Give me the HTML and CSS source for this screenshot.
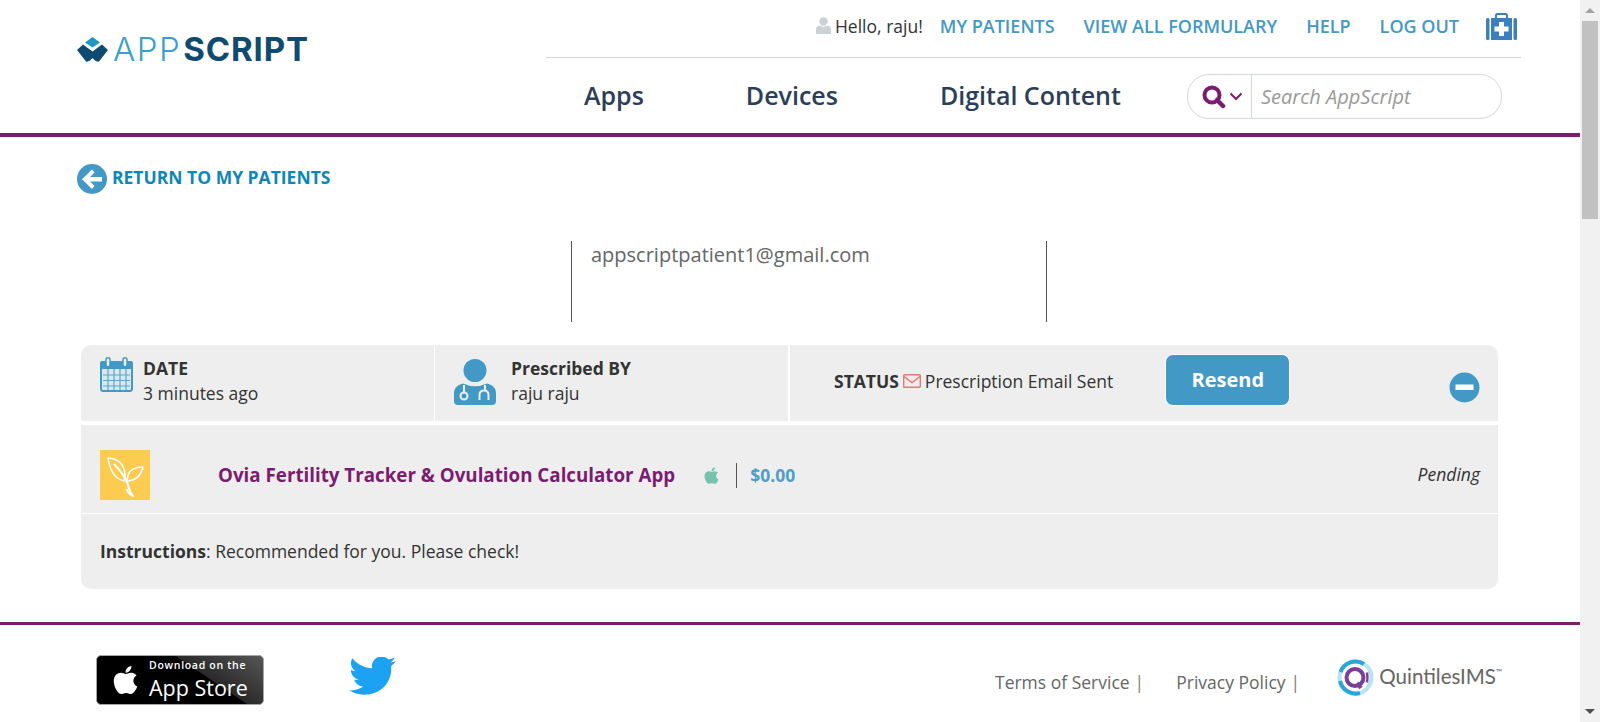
FILE: index.html
```html
<!DOCTYPE html>
<html lang="en">
<head>
    <meta charset="UTF-8">
    <meta name="viewport" content="width=device-width, initial-scale=1.0">
    <title>AppScript - Patient Prescriptions</title>
    <link rel="stylesheet" href="styles.css">
</head>
<body>
<div class="page">
    <div class="main">

        <!-- Header -->
        <header class="site-header">
            <a class="logo" href="#">
                <svg class="logo-mark" width="31" height="25" viewBox="0 0 31 25">
                    <path d="M15.500 0L23 5.500L15.500 10.500L8 5.500Z" fill="#1f97c4"/>
                    <path d="M6 7.500L15.500 14.500L25 7.500L31 13L22 24.500Q20 25 18 23.500L15.500 21L13 23.500Q11 25 9 24.500L0 13Z" fill="#0f4a70"/>
                </svg>
                <span class="logo-app">APP</span><span class="logo-script">SCRIPT</span>
            </a>
            <div class="header-right">
                <div class="top-links">
                    <svg class="user-icon" width="15" height="17" viewBox="0 0 15 17">
                        <circle cx="7.500" cy="4.500" r="4.200" fill="#ccd1d3"/>
                        <path d="M0 17V12.500Q0 9 3.500 8.500L7.500 10L11.500 8.500Q15 9 15 12.500V17Z" fill="#ccd1d3"/>
                    </svg>
                    <span class="hello">Hello, raju!</span>
                    <a href="#" class="top-link">MY PATIENTS</a>
                    <a href="#" class="top-link">VIEW ALL FORMULARY</a>
                    <a href="#" class="top-link">HELP</a>
                    <a href="#" class="top-link last">LOG OUT</a>
                    <svg class="bag-icon" width="31" height="27" viewBox="0 0 31 27">
                        <path d="M10 5V2.500Q10 1 11.500 1H19.500Q21 1 21 2.500V5" fill="none" stroke="#3b7fbc" stroke-width="2"/>
                        <rect x="0" y="5" width="3.500" height="22" rx="1.500" fill="#3b7fbc"/>
                        <rect x="27.500" y="5" width="3.500" height="22" rx="1.500" fill="#3b7fbc"/>
                        <rect x="5" y="5" width="21" height="22" fill="#3b7fbc"/>
                        <path d="M13 9H18V13.500H22.500V18.500H18V23H13V18.500H8.500V13.500H13Z" fill="#fff"/>
                    </svg>
                </div>
                <div class="nav-row">
                    <nav class="main-nav">
                        <a href="#">Apps</a>
                        <a href="#">Devices</a>
                        <a href="#">Digital Content</a>
                    </nav>
                    <div class="search-box">
                        <div class="search-type">
                            <svg width="24" height="24" viewBox="0 0 24 24">
                                <circle cx="10" cy="10" r="7.500" fill="none" stroke="#7a1c70" stroke-width="4"/>
                                <path d="M15 15L21 21" stroke="#7a1c70" stroke-width="4.500" stroke-linecap="round"/>
                            </svg>
                            <svg width="14" height="9" viewBox="0 0 14 9">
                                <path d="M1.500 1.500L7 7L12.500 1.500" fill="none" stroke="#7a1c70" stroke-width="2"/>
                            </svg>
                        </div>
                        <span class="search-placeholder">Search AppScript</span>
                    </div>
                </div>
            </div>
        </header>

        <div class="content">
            <a href="#" class="back-link">
                <svg width="30" height="30" viewBox="0 0 30 30">
                    <circle cx="15" cy="15" r="15" fill="#4299c6"/>
                    <path d="M15 5.500L17.500 8.500L13 13H25V17.500H13L17.500 22L15 25L5 15.200Z" fill="#fff"/>
                </svg>
                <span>RETURN TO MY PATIENTS</span>
            </a>

            <div class="patient-row">
                <div class="patient-email">appscriptpatient1@gmail.com</div>
            </div>

            <!-- Prescription panel -->
            <section class="panel">
                <div class="panel-head">
                    <div class="cell cell-date">
                        <svg class="calendar-icon" width="33" height="35" viewBox="0 0 33 35">
                            <rect x="1" y="5" width="31" height="29" rx="2.500" fill="#dbe7ee" stroke="#4299c6" stroke-width="2"/>
                            <rect x="0" y="4" width="33" height="8" rx="2" fill="#4299c6"/>
                            <rect x="6" y="0.800" width="4" height="9" rx="2" fill="#eee" stroke="#4299c6" stroke-width="1.500"/>
                            <rect x="23" y="0.800" width="4" height="9" rx="2" fill="#eee" stroke="#4299c6" stroke-width="1.500"/>
                            <path d="M3 18H30M3 23.500H30M3 29H30M8 12V33M14 12V33M20 12V33M26 12V33" stroke="#5ba6cf" stroke-width="1.200" fill="none"/>
                        </svg>
                        <div class="cell-text">
                            <strong>DATE</strong>
                            <span>3 minutes ago</span>
                        </div>
                    </div>
                    <div class="cell cell-doctor">
                        <svg class="doctor-icon" width="42" height="46" viewBox="0 0 42 46">
                            <circle cx="21" cy="11.500" r="11.500" fill="#4299c6"/>
                            <path d="M9 24.500Q21 30 33 24.500L36 25.500Q42 28 42 34V42Q42 46 38 46H4Q0 46 0 42V34Q0 28 6 25.500Z" fill="#4299c6"/>
                            <path d="M10 26V33" fill="none" stroke="#eee" stroke-width="2"/>
                            <circle cx="10" cy="37" r="3.500" fill="none" stroke="#eee" stroke-width="2"/>
                            <path d="M25.500 41V36Q25.500 31.500 30 31.500Q34.500 31.500 34.500 36V41M31 26V31" fill="none" stroke="#eee" stroke-width="2"/>
                        </svg>
                        <div class="cell-text">
                            <strong>Prescribed BY</strong>
                            <span>raju raju</span>
                        </div>
                    </div>
                    <div class="cell cell-status">
                        <strong>STATUS</strong>
                        <svg class="mail-icon" width="18" height="14" viewBox="0 0 18 14">
                            <rect x="0.700" y="0.700" width="16.600" height="12.600" rx="1" fill="none" stroke="#e5786d" stroke-width="1.400"/>
                            <path d="M1 2.500L9 8.500L17 2.500" fill="none" stroke="#e5786d" stroke-width="1.400"/>
                        </svg>
                        <span class="status-text">Prescription Email Sent</span>
                        <button class="btn-resend">Resend</button>
                        <svg class="collapse-icon" width="31" height="31" viewBox="0 0 31 31">
                            <circle cx="15.500" cy="15.500" r="15" fill="#4299c6"/>
                            <rect x="6.500" y="12.500" width="18" height="5.500" fill="#fff"/>
                        </svg>
                    </div>
                </div>

                <div class="app-row">
                    <div class="app-tile">
                        <svg width="50" height="50" viewBox="0 0 50 50">
                            <g fill="none" stroke="#fff" stroke-width="1.600" stroke-linejoin="round">
                                <path d="M8 8Q21 9 24 19Q26 26 24 31Q11 28 8 8Z"/>
                                <path d="M43 17Q31 17 28 25Q27 29 27.500 31Q40 30 43 17Z"/>
                                <path d="M14 14Q26 26 29 38Q30 43 33 46Q28 44 26.500 39" stroke-width="2"/>
                            </g>
                        </svg>
                    </div>
                    <a href="#" class="app-name">Ovia Fertility Tracker &amp; Ovulation Calculator App</a>
                    <svg class="apple-icon" width="17" height="19" viewBox="0 0 384 512">
                        <path fill="#76c2ad" d="M318.700 268.700c-.2-36.700 16.400-64.400 50-84.800-18.800-26.900-47.200-41.700-84.700-44.600-35.500-2.800-74.300 20.700-88.500 20.700-15 0-49.400-19.700-76.400-19.700C63.300 141.200 4 184.800 4 273.500q0 39.300 14.400 81.200c12.800 36.700 59 126.700 107.200 125.200 25.200-.6 43-17.900 75.800-17.900 31.800 0 48.300 17.900 76.400 17.900 48.600-.7 90.400-82.500 102.600-119.300-65.200-30.700-61.700-90-61.700-91.900zm-56.600-164.200c27.300-32.400 24.800-61.900 24-72.500-24.100 1.400-52 16.400-67.900 34.900-17.500 19.800-27.800 44.300-25.600 71.900 26.100 2 49.900-11.400 69.500-34.300z"/>
                    </svg>
                    <span class="app-price">$0.00</span>
                    <em class="app-state">Pending</em>
                </div>

                <div class="instructions"><strong>Instructions</strong>: Recommended for you. Please check!</div>
            </section>
        </div>

        <!-- Footer -->
        <footer class="site-footer">
            <a href="#" class="store-badge">
                <svg width="27" height="32" viewBox="0 0 384 512">
                    <path fill="#fff" d="M318.700 268.700c-.2-36.700 16.400-64.400 50-84.800-18.800-26.900-47.200-41.700-84.700-44.600-35.500-2.800-74.300 20.700-88.500 20.700-15 0-49.400-19.700-76.400-19.700C63.300 141.200 4 184.800 4 273.500q0 39.300 14.400 81.200c12.800 36.700 59 126.700 107.200 125.200 25.200-.6 43-17.900 75.800-17.900 31.800 0 48.300 17.900 76.400 17.900 48.600-.7 90.400-82.500 102.600-119.300-65.200-30.700-61.700-90-61.700-91.900zm-56.600-164.200c27.300-32.400 24.800-61.900 24-72.500-24.100 1.400-52 16.400-67.900 34.900-17.500 19.800-27.800 44.300-25.600 71.900 26.100 2 49.900-11.400 69.500-34.300z"/>
                </svg>
                <span class="badge-text">
                    <small>Download on the</small>
                    <b>App Store</b>
                </span>
            </a>
            <a href="#" class="twitter">
                <svg width="47" height="40" viewBox="0 0 512 420">
                    <path fill="#1da1f2" d="M459.370 110.700c.325 4.548.325 9.097.325 13.645 0 138.720-105.583 278-298.558 278-59.452 0-114.680-17.219-161.137-47.106 8.447.974 16.568 1.299 25.340 1.299 49.055 0 94.213-16.568 130.274-44.832-46.132-.975-84.792-31.188-98.112-72.772 6.498.974 12.995 1.624 19.818 1.624 9.421 0 18.843-1.300 27.614-3.573-48.081-9.747-84.143-51.980-84.143-102.985v-1.299c13.969 7.797 30.214 12.670 47.431 13.319-28.264-18.843-46.781-51.005-46.781-87.391 0-19.492 5.197-37.360 14.294-52.954 51.655 63.675 129.300 105.258 216.365 109.807-1.624-7.797-2.599-15.918-2.599-24.040 0-57.828 46.782-104.934 104.934-104.934 30.213 0 57.502 12.670 76.670 33.137 23.715-4.548 46.456-13.320 66.599-25.340-7.798 24.366-24.366 44.833-46.132 57.827 21.117-2.273 41.584-8.122 60.426-16.243-14.292 20.791-32.161 39.308-52.628 54.253z"/>
                </svg>
            </a>
            <div class="footer-links">
                <a href="#">Terms of Service</a><span class="pipe">|</span>
                <a href="#" class="second">Privacy Policy</a><span class="pipe">|</span>
            </div>
            <div class="quintiles">
                <svg width="37" height="37" viewBox="0 0 37 37">
                    <g fill="none" stroke-width="4">
                        <circle cx="18.500" cy="18.500" r="16" stroke="#b7e3f3"/>
                        <path d="M27 5A16 16 0 0 0 3.500 13M3 22A16 16 0 0 0 23 34" stroke="#2aa7d9"/>
                        <circle cx="18" cy="18.500" r="8.500" stroke="#7c3f98"/>
                        <path d="M20 24L24 29" stroke="#7c3f98"/>
                        <path d="M30 13.500Q31 18.500 30 23.500" stroke="#7c3f98" stroke-width="2.500"/>
                    </g>
                </svg>
                <span class="quintiles-name">QuintilesIMS<sup>™</sup></span>
            </div>
        </footer>
    </div>

    <!-- Browser scrollbar as it appears in the page -->
    <div class="scrollbar">
        <div class="scroll-arrow"><div class="arrow-up"></div></div>
        <div class="scroll-thumb"></div>
        <div class="scroll-track"></div>
        <div class="scroll-arrow"><div class="arrow-down"></div></div>
    </div>
</div>
</body>
</html>
```

FILE: styles.css
```css
* {
    box-sizing: border-box;
}

html, body {
    margin: 0;
    padding: 0;
    height: 722px;
    overflow: hidden;
    background-color: #fff;
}

body {
    font-family: "Open Sans", Arial, sans-serif;
    color: #333;
}

a {
    text-decoration: none;
}

svg {
    display: block;
    flex: none;
}

.page {
    display: flex;
    height: 722px;
}

.main {
    width: 1580px;
    flex: none;
}

/* Header */
.site-header {
    display: flex;
    height: 137px;
    border-bottom: 4px solid #7a1c70;
}

.logo {
    display: flex;
    align-items: center;
    height: 26px;
    margin: 36px 0 0 77px;
    white-space: nowrap;
}

.logo-mark {
    margin-right: 5px;
}

.logo-app,
.logo-script {
    font-family: Inter, "Liberation Sans", sans-serif;
    font-size: 33px;
    line-height: 26px;
}

.logo-app {
    font-weight: 300;
    color: #3a9fca;
    letter-spacing: 1.5px;
}

.logo-script {
    font-weight: 700;
    color: #0f4a70;
    letter-spacing: 0.9px;
    margin-left: 2px;
}

.header-right {
    width: 975px;
    margin: 0 59px 0 auto;
}

.top-links {
    display: flex;
    align-items: center;
    justify-content: flex-end;
    height: 58px;
    padding: 0 4px 6px 0;
    border-bottom: 1px solid #d3d6d8;
}

.user-icon {
    margin-right: 4px;
}

.hello {
    font-size: 17.500px;
    color: #333;
    margin-right: 17px;
}

.top-link {
    font-size: 18px;
    font-weight: 600;
    color: #4299c6;
    margin-right: 29px;
}

.top-link.last {
    margin-right: 27px;
}

.bag-icon {
    margin-top: 2px;
}

.nav-row {
    display: flex;
    align-items: center;
    height: 74px;
    padding: 0 19px 0 38px;
    justify-content: space-between;
}

.main-nav {
    display: flex;
    gap: 102px;
}

.main-nav a {
    font-size: 25px;
    font-weight: 600;
    color: #2b3e5a;
}

.search-box {
    display: flex;
    align-items: center;
    width: 315px;
    height: 45px;
    margin-top: 3px;
    border: 1px solid #d3d8da;
    border-radius: 22px;
    background-color: #fff;
}

.search-type {
    display: flex;
    align-items: center;
    gap: 3px;
    width: 64px;
    height: 100%;
    padding-left: 14px;
    border-right: 1px solid #d3d8da;
}

.search-placeholder {
    margin-left: 9px;
    font-size: 20px;
    font-style: italic;
    color: #999;
}

/* Content */
.content {
    padding: 27px 82px 0 81px;
}

.back-link {
    display: flex;
    align-items: center;
    margin-left: -4px;
    height: 30px;
    gap: 5px;
    font-size: 17.500px;
    font-weight: 700;
    color: #0f86b8;
}

.back-link span {
    margin-top: -5px;
}

.patient-row {
    height: 81px;
    margin: 47px 451px 0 490px;
    padding: 0 19px;
    border-left: 1px solid #555;
    border-right: 1px solid #555;
}

.patient-email {
    font-size: 20px;
    line-height: 28px;
    color: #666;
}

.panel {
    margin-top: 23px;
}

.panel-head {
    display: flex;
    height: 76px;
    margin-bottom: 4px;
    border-radius: 10px 10px 0 0;
    background-color: #eee;
}

.cell {
    display: flex;
    align-items: flex-start;
    height: 100%;
}

.cell-text {
    display: flex;
    flex-direction: column;
    margin-top: 1px;
    font-size: 17.500px;
    line-height: 25px;
}

.cell-text strong {
    font-weight: 700;
}

.cell-date {
    width: 354px;
    padding: 10px 0 0 19px;
    gap: 10px;
    border-right: 1px solid #fff;
}

.calendar-icon {
    margin-top: 2px;
}

.cell-doctor {
    width: 355px;
    padding: 10px 0 0 19px;
    gap: 15px;
    border-right: 2px solid #fff;
}

.doctor-icon {
    margin-top: 4px;
}

.cell-status {
    flex: 1;
    align-items: center;
    padding: 0 18px 4px 44px;
    font-size: 17.500px;
}

.mail-icon {
    margin: 0 4px;
}

.btn-resend {
    width: 125px;
    height: 52px;
    margin: -2px 0 0 52px;
    border: 1px solid #fff;
    border-radius: 8px;
    background-color: #4299c6;
    color: #fff;
    font-family: inherit;
    font-size: 20px;
    font-weight: 700;
    padding: 0 0 2px;
}

.collapse-icon {
    margin: 12px 0 0 auto;
}

.app-row {
    display: flex;
    align-items: center;
    height: 89px;
    padding: 12px 18px 0 19px;
    border-bottom: 1px solid #fff;
    background-color: #eee;
}

.app-tile {
    width: 50px;
    height: 50px;
    background-color: #fdcb50;
}

.app-name {
    margin: -2px 0 0 68px;
    font-size: 18.750px;
    font-weight: 700;
    color: #7a1c70;
}

.apple-icon {
    margin-left: 28px;
}

.app-price {
    margin-left: 16px;
    padding-left: 13px;
    border-left: 1px solid #555;
    font-size: 17.500px;
    font-weight: 700;
    line-height: 25px;
    color: #4f9ec9;
}

.app-state {
    margin: -2px 0 0 auto;
    font-size: 17.500px;
    color: #333;
}

.instructions {
    height: 75px;
    padding: 0 19px;
    font-size: 17.500px;
    line-height: 74px;
    border-radius: 0 0 10px 10px;
    background-color: #eee;
}

.instructions strong {
    font-weight: 700;
}

/* Footer */
.site-footer {
    display: flex;
    height: 100px;
    margin-top: 33px;
    border-top: 3px solid #7a1c70;
}

.store-badge {
    display: flex;
    align-items: center;
    width: 168px;
    height: 50px;
    margin: 30px 0 0 96px;
    padding-left: 15px;
    gap: 10px;
    border: 1px solid #a6a6a6;
    border-radius: 5px;
    background-color: #000;
    background-image: linear-gradient(34deg, transparent 63%, rgba(255, 255, 255, 0.16) 63.500%, rgba(255, 255, 255, 0.34) 100%);
    color: #fff;
}

.badge-text {
    display: flex;
    flex-direction: column;
    white-space: nowrap;
}

.badge-text small {
    font-family: "Open Sans", sans-serif;
    font-size: 10.500px;
    font-weight: 600;
    line-height: 15px;
    letter-spacing: 0.7px;
}

.badge-text b {
    font-family: "Open Sans", sans-serif;
    font-size: 21.500px;
    font-weight: 500;
    line-height: 30px;
}

.twitter {
    margin: 32px 0 0 85px;
}

.footer-links {
    display: flex;
    align-items: center;
    height: 28px;
    margin: 43px 0 0 599px;
    font-size: 17.500px;
    color: #666;
    white-space: nowrap;
}

.footer-links a {
    color: #666;
}

.footer-links .second {
    margin-left: 32px;
}

.pipe {
    margin-left: 5px;
    color: #8a7a70;
}

.quintiles {
    display: flex;
    align-items: center;
    gap: 5px;
    height: 37px;
    margin: 34px 78px 0 auto;
    white-space: nowrap;
}

.quintiles-name {
    font-family: Lato, "Open Sans", sans-serif;
    font-size: 20.500px;
    font-weight: 400;
    color: #666;
    margin-bottom: 4px;
}

.quintiles-name sup {
    font-size: 8px;
    vertical-align: 9px;
    line-height: 0;
}

/* Scrollbar */
.scrollbar {
    display: flex;
    flex-direction: column;
    width: 20px;
    height: 722px;
    background-color: #f1f1f1;
}

.scroll-arrow {
    display: flex;
    align-items: center;
    justify-content: center;
    height: 21px;
}

.arrow-up {
    border: 5px solid transparent;
    border-top: 0;
    border-bottom: 5px solid #a3a3a3;
}

.arrow-down {
    border: 5px solid transparent;
    border-bottom: 0;
    border-top: 5px solid #505050;
}

.scroll-thumb {
    height: 198px;
    margin: 0 2px;
    background-color: #c1c1c1;
}

.scroll-track {
    flex: 1;
}
```
